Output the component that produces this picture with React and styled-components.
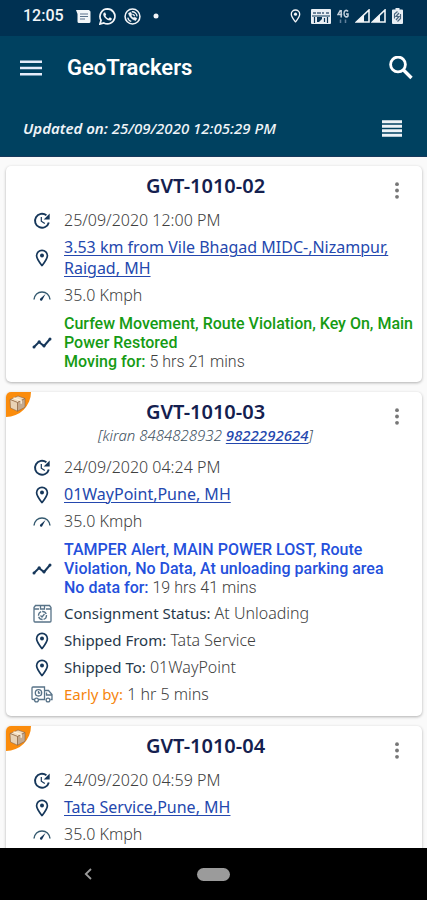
import React from "react";
import styled, { createGlobalStyle, css } from "styled-components";

const GlobalStyle = createGlobalStyle`
  *, *::before, *::after { box-sizing: border-box; }
  html, body { margin: 0; padding: 0; }
  body {
    background: #fafafa;
    font-family: "Noto Sans", "Open Sans", sans-serif;
    color: #5c5c5c;
  }
  svg { display: block; flex: none; }
`;

const Screen = styled.div`
  display: flex;
  flex-direction: column;
  height: 100vh;
`;

const StatusBar = styled.div`
  display: flex;
  align-items: center;
  justify-content: space-between;
  height: 36px;
  padding: 0 24px 4px 23px;
  background: #003152;
  color: #f2f5f8;
  font: 500 16px/20px Roboto, sans-serif;
`;

const StatusGroup = styled.div`
  display: flex;
  align-items: center;
  gap: ${(p) => p.$gap}px;
`;

const Clock = styled.span`
  margin-right: 4px;
`;

const AppBar = styled.header`
  display: flex;
  flex-direction: column;
  gap: 10px;
  padding: 10px 12px 0 20px;
  background: #004160;
  border-bottom: 1px solid #17395c;
  color: #fff;
`;

const BarRow = styled.div`
  display: flex;
  align-items: center;
  height: ${(p) => p.$height}px;
`;

const IconButton = styled.button`
  display: flex;
  align-items: center;
  justify-content: center;
  width: ${(p) => p.$width}px;
  height: 28px;
  padding: 0;
  border: 0;
  background: none;
  color: inherit;
  cursor: pointer;
`;

const AppTitle = styled.h1`
  flex: 1;
  margin: 0 0 0 25px;
  font: 600 22px/28px Roboto, sans-serif;
`;

const Updated = styled.p`
  flex: 1;
  margin: 0 0 0 3px;
  font-size: 15px;
  line-height: 20px;
  font-style: italic;
  font-weight: 500;
  color: #eef3f7;

  b { font-weight: 600; }
`;

const List = styled.main`
  flex: 1;
  min-height: 0;
  overflow: hidden;
  display: flex;
  flex-direction: column;
  gap: 10px;
  padding: 9px 5px 0 6px;
`;

const Card = styled.article`
  position: relative;
  flex: none;
  padding: 8px 8px 11px 0;
  border-radius: 5px;
  background: #fff;
  box-shadow: 0 1px 3px rgba(0, 0, 0, 0.3);
`;

const Badge = styled.span`
  position: absolute;
  top: 0;
  left: 0;
  width: 25px;
  height: 25px;
  padding: 3px;
  border-radius: 5px 0 25px 0;
  background: #fb8c0c;
`;

const CardHeader = styled.div`
  display: grid;
  grid-template-columns: 16px 1fr 16px;
  align-items: start;
  padding: 0 9px 12px 0;
  text-align: center;
`;

const Heading = styled.div`
  grid-column: 2;
`;

const OptionsButton = styled(IconButton)`
  height: 32px;
  margin-bottom: -8px;
`;

const VehicleName = styled.h2`
  margin: 0;
  font-size: 20px;
  line-height: 24px;
  font-weight: 600;
  color: #14204f;
`;

const Driver = styled.p`
  margin: 2px 0 0;
  font-size: 15px;
  line-height: 19px;
  font-style: italic;
  font-weight: 300;
  color: #3d5060;
`;

const Link = styled.a`
  color: #2448ae;
  text-decoration: underline;
  text-decoration-thickness: 1px;
  text-underline-offset: 2px;
  font-weight: ${(p) => (p.$strong ? 500 : 400)};
`;

const Rows = styled.ul`
  display: flex;
  flex-direction: column;
  gap: 6px;
  margin: 0;
  padding: 0 0 0 26px;
  list-style: none;
`;

const Row = styled.li`
  display: grid;
  grid-template-columns: 20px 1fr;
  column-gap: 12px;
  align-items: center;
  font-size: 16px;
  line-height: 21px;
  font-weight: 300;
  color: #404040;

  > svg { justify-self: center; color: #16375a; }

  ${(p) =>
    p.$alert &&
    css`
      margin-top: 2px;
      font-family: Roboto, sans-serif;
      line-height: 19px;
    `}
`;

const toneColors = { green: "#169b14", blue: "#2450dc", orange: "#f6860f", dark: "#26384a" };

const DetailLabel = styled.span`
  color: ${(p) => toneColors[p.$tone]};
  font-size: 15px;
  font-weight: 400;
`;

const AlertLabel = styled.span`
  color: ${(p) => toneColors[p.$tone]};
  font-weight: 500;
`;

const AlertLine = styled.div`
  color: ${(p) => toneColors[p.$tone]};
  font-weight: 500;
`;

const NavBar = styled.nav`
  display: grid;
  grid-template-columns: 1fr auto 1fr;
  align-items: center;
  height: 52px;
  background: #000;
  color: #9b9b9b;
`;

const NavBack = styled(IconButton)`
  justify-self: center;
  margin-right: 22px;
`;

const HomePill = styled.button`
  width: 33px;
  height: 13px;
  padding: 0;
  border: 0;
  border-radius: 7px;
  background: #9b9b9b;
`;

/* ---------- icons ---------- */

const NewsIcon = () => (
  <svg width="15" height="13" viewBox="0 0 15 13">
    <path d="M0 0h13l1.500 1.500V11.500a1.500 1.500 0 0 1-1.500 1.500H3a1.500 1.500 0 0 1-1.500-1.500V4z" fill="#f2f5f8" />
    <path d="M4 4h8M4 6.500h8M4 9h5" stroke="#5a718a" strokeWidth="1.200" />
  </svg>
);

const WhatsAppIcon = () => (
  <svg width="17" height="17" viewBox="0 0 24 24" fill="#f2f5f8">
    <path d="M17.472 14.382c-.297-.149-1.758-.867-2.030-.967-.273-.099-.471-.148-.670.150-.197.297-.767.966-.940 1.164-.173.199-.347.223-.644.075-.297-.150-1.255-.463-2.390-1.475-.883-.788-1.480-1.761-1.653-2.059-.173-.297-.018-.458.130-.606.134-.133.298-.347.446-.520.149-.174.198-.298.298-.497.099-.198.050-.371-.025-.520-.075-.149-.669-1.612-.916-2.207-.242-.579-.487-.500-.669-.510-.173-.008-.371-.010-.570-.010-.198 0-.520.074-.792.372-.272.297-1.040 1.016-1.040 2.479 0 1.462 1.065 2.875 1.213 3.074.149.198 2.096 3.200 5.077 4.487.709.306 1.262.489 1.694.625.712.227 1.360.195 1.871.118.571-.085 1.758-.719 2.006-1.413.248-.694.248-1.289.173-1.413-.074-.124-.272-.198-.570-.347" />
    <path d="M12 1.300a10.600 10.600 0 0 0-9.100 16L1.300 22.700l5.500-1.500A10.600 10.600 0 1 0 12 1.300z" fill="none" stroke="#f2f5f8" strokeWidth="2.400" />
  </svg>
);

const CallIcon = () => (
  <svg width="17" height="17" viewBox="0 0 24 24" fill="none" stroke="#f2f5f8" strokeWidth="2.200">
    <circle cx="12" cy="12" r="10.500" />
    <path d="M6.500 7.500c1 5 5 9 10 10l1.500-3-3.500-1.500-1.500 1c-1.500-.7-2.500-1.700-3-3l1-1.500-1.500-3.500z" fill="#f2f5f8" strokeWidth="1" />
    <path d="M11 5.300a7 7 0 0 1 7.500 6.500M5.300 13.500a7 7 0 0 0 5 5.300M12 9a3.500 3.500 0 0 1 3 2.500" strokeWidth="1.800" />
  </svg>
);

const DotIcon = () => (
  <svg width="12" height="6" viewBox="0 0 12 6"><circle cx="7" cy="3" r="2.500" fill="#f2f5f8" /></svg>
);

const PinIcon = ({ width = 14, height = 18 }) => (
  <svg width={width} height={height} viewBox="0 0 14 18" fill="none" stroke="currentColor" strokeWidth="1.700">
    <path d="M7 16.600C4 12.700 1.600 9.700 1.600 6.700a5.400 5.400 0 0 1 10.800 0c0 3-2.400 6-5.400 9.900z" strokeLinejoin="round" />
    <circle cx="7" cy="6.600" r="2" fill="currentColor" stroke="none" />
  </svg>
);

const VolteIcon = () => (
  <svg width="20" height="15" viewBox="0 0 20 15">
    <rect width="20" height="15" rx="1" fill="#e8eef4" />
    <path d="M2 4h3M6 4h4M11 4h2M15 4h3" stroke="#6b8299" strokeWidth="2" />
    <path d="M1 7h18" stroke="#0a3657" strokeWidth="1" />
    <path d="M3.500 8v6M16.500 8v6M13.500 9v4" stroke="#0a3657" strokeWidth="1.200" fill="none" />
    <path d="M6 8h5v2L8 13H6z" fill="#0a3657" />
  </svg>
);

const FourGIcon = () => (
  <svg width="12" height="15" viewBox="0 0 12 15" fill="none" stroke="#c3d0dc" strokeWidth="1.500">
    <path d="M3.500 1 1 5.500h4.200M4.200 1v7.500M11 2.500C10 .800 7 .800 7 4.500s3 4 4 2.500V5H9" />
    <path d="M3.500 10.500v3.500M8.500 10.500v3.500" stroke="#60809b" />
  </svg>
);

const SignalIcon = () => (
  <svg width="15" height="14" viewBox="0 0 15 14">
    <path d="M14 1v12H1.500z" fill="none" stroke="#f2f5f8" strokeWidth="1.600" />
    <path d="M9 5.500V13H1.500z" fill="#f2f5f8" />
  </svg>
);

const BatteryIcon = () => (
  <svg width="11" height="16" viewBox="0 0 11 16">
    <path d="M3.500 0h4v1.500H10a1 1 0 0 1 1 1V15a1 1 0 0 1-1 1H1a1 1 0 0 1-1-1V2.500a1 1 0 0 1 1-1h2.500z" fill="#e8eef4" />
    <path d="M2.500 10.500V6l3-2.500M8.500 6v4.500l-3 3M7 5 4 8.500h3L4 12" stroke="#4a667f" strokeWidth="1.200" fill="none" />
  </svg>
);

const MenuIcon = () => (
  <svg width="22" height="16" viewBox="0 0 22 16" stroke="#e6ecfa" strokeWidth="2.600">
    <path d="M0 1.700h22M0 8h22M0 14.300h22" />
  </svg>
);

const SearchIcon = () => (
  <svg width="25" height="25" viewBox="0 0 25 25" fill="none" stroke="#fff">
    <circle cx="9" cy="8.500" r="7.400" strokeWidth="2.800" />
    <path d="m14.500 14 8 8" strokeWidth="3.400" />
  </svg>
);

const ListIcon = () => (
  <svg width="20" height="17" viewBox="0 0 20 17" stroke="#eef3f7" strokeWidth="3">
    <path d="M0 1.800h20M0 6.300h20M0 10.800h20M0 15.300h20" />
  </svg>
);

const MoreIcon = () => (
  <svg width="4" height="17" viewBox="0 0 4 17" fill="#777">
    <circle cx="2" cy="2.200" r="1.900" /><circle cx="2" cy="8.500" r="1.900" /><circle cx="2" cy="14.800" r="1.900" />
  </svg>
);

const UpdateIcon = () => (
  <svg width="18" height="18" viewBox="0 0 18 18" fill="none" stroke="currentColor" strokeWidth="1.900">
    <path d="M13.400 3.300A7 7 0 1 0 15.800 10.500" />
    <path d="M16.700 1.500v6h-6z" fill="currentColor" stroke="none" />
    <path d="M8.300 5v4.200l3.500 2.300" strokeWidth="1.200" />
  </svg>
);

const SpeedIcon = () => (
  <svg width="18" height="12" viewBox="0 0 18 12" fill="none" stroke="#34596f" strokeWidth="1.500">
    <path d="M1 9.500C1.600 5 4.800 2 9 2s7.400 3 8 7.500" />
    <path d="M12.500 4 7.300 8.600c-1.200 1.500.6 3 1.900 1.600z" fill="#16375a" stroke="none" />
  </svg>
);

const TrendIcon = () => (
  <svg width="20" height="12" viewBox="0 0 20 12" fill="none" stroke="currentColor" strokeWidth="2">
    <path d="m2 10 5-5 5 4 6-7" />
    <g fill="currentColor" stroke="none">
      <circle cx="2" cy="10" r="1.500" /><circle cx="7.200" cy="4.800" r="1.600" />
      <circle cx="12" cy="8.800" r="1.600" /><circle cx="18" cy="2" r="1.500" />
    </g>
  </svg>
);

const ConsignmentIcon = () => (
  <svg width="19" height="19" viewBox="0 0 19 19" fill="none" stroke="#587388" strokeWidth="1.300">
    <path d="M1 3.500 2.500 1.500h14L18 3.500V17a1 1 0 0 1-1 1H2a1 1 0 0 1-1-1zM1 5h5M13 5h5M7.500 1.500V5h4V1.500" />
    <circle cx="9.500" cy="11.500" r="4" strokeDasharray="5 1" />
    <path d="m7.500 11.500 1.500 1.500 2.500-3" />
  </svg>
);

const TruckIcon = () => (
  <svg width="22" height="17" viewBox="0 0 22 17" fill="none" stroke="#587388" strokeWidth="1.300">
    <path d="M3.500 13.500H2a1 1 0 0 1-1-1V2a1 1 0 0 1 1-1h11.500v12.500H7.500M13.500 4.500h4l3.500 4v5h-1.500M15.500 6.500V9H21" />
    <circle cx="5.500" cy="14" r="1.900" /><circle cx="17" cy="14" r="1.900" />
    <circle cx="7.500" cy="6.800" r="3.200" /><path d="M7.500 5v2h1.800" />
  </svg>
);

const BoxIcon = () => (
  <svg width="17" height="17" viewBox="0 0 17 17" stroke="#8a6547" strokeWidth=".6" strokeLinejoin="round">
    <path d="M1 4.500 9 1l7 2.500-7.500 4z" fill="#f1dcc0" />
    <path d="m1 4.500 7.500 3v8.700L1.500 13z" fill="#e9d3b6" />
    <path d="m8.500 7.500 7.500-4v8.800l-7.500 3.900z" fill="#c3aa90" />
    <path d="m4.500 2.900 7.700 2.600v3.200" fill="none" stroke="#fff3df" strokeWidth="1.300" />
  </svg>
);

const BackIcon = () => (
  <svg width="8" height="12" viewBox="0 0 8 12" fill="none" stroke="currentColor" strokeWidth="1.800">
    <path d="M7 1 1.800 6 7 11" />
  </svg>
);

/* ---------- content ---------- */

const vehicles = [
  {
    name: "GVT-1010-02",
    time: "25/09/2020 12:00 PM",
    place: "3.53 km from Vile Bhagad MIDC-,Nizampur, Raigad, MH",
    speed: "35.0 Kmph",
    alert: {
      tone: "green",
      text: "Curfew Movement, Route Violation, Key On, Main Power Restored",
      label: "Moving for:",
      value: "5 hrs 21 mins",
    },
  },
  {
    name: "GVT-1010-03",
    shipment: true,
    driver: { text: "kiran 8484828932", phone: "9822292624" },
    time: "24/09/2020 04:24 PM",
    place: "01WayPoint,Pune, MH",
    speed: "35.0 Kmph",
    alert: {
      tone: "blue",
      text: "TAMPER Alert, MAIN POWER LOST, Route Violation, No Data, At unloading parking area",
      label: "No data for:",
      value: "19 hrs 41 mins",
    },
    details: [
      { Icon: ConsignmentIcon, label: "Consignment Status:", value: "At Unloading", tone: "dark" },
      { Icon: PinIcon, label: "Shipped From:", value: "Tata Service", tone: "dark" },
      { Icon: PinIcon, label: "Shipped To:", value: "01WayPoint", tone: "dark" },
      { Icon: TruckIcon, label: "Early by:", value: "1 hr 5 mins", tone: "orange" },
    ],
  },
  {
    name: "GVT-1010-04",
    shipment: true,
    time: "24/09/2020 04:59 PM",
    place: "Tata Service,Pune, MH",
    speed: "35.0 Kmph",
  },
];

function VehicleCard({ vehicle }) {
  const { name, shipment, driver, time, place, speed, alert, details = [] } = vehicle;
  return (
    <Card>
      {shipment && <Badge><BoxIcon /></Badge>}
      <CardHeader>
        <Heading>
          <VehicleName>{name}</VehicleName>
          {driver && (
            <Driver>
              [{driver.text} <Link $strong href={`tel:${driver.phone}`}>{driver.phone}</Link>]
            </Driver>
          )}
        </Heading>
        <OptionsButton $width={16} aria-label={`Options for ${name}`}><MoreIcon /></OptionsButton>
      </CardHeader>
      <Rows>
        <Row><UpdateIcon /><span>{time}</span></Row>
        <Row><PinIcon /><span><Link href="#map">{place}</Link></span></Row>
        <Row><SpeedIcon /><span>{speed}</span></Row>
        {alert && (
          <Row $alert>
            <TrendIcon />
            <div>
              <AlertLine $tone={alert.tone}>{alert.text}</AlertLine>
              <AlertLabel $tone={alert.tone}>{alert.label}</AlertLabel> {alert.value}
            </div>
          </Row>
        )}
        {details.map(({ Icon, label, value, tone }) => (
          <Row key={label}>
            <Icon />
            <span><DetailLabel $tone={tone}>{label}</DetailLabel> {value}</span>
          </Row>
        ))}
      </Rows>
    </Card>
  );
}

export default function App() {
  return (
    <Screen>
      <GlobalStyle />
      <StatusBar>
        <StatusGroup $gap={8}>
          <Clock>12:05</Clock>
          <NewsIcon />
          <WhatsAppIcon />
          <CallIcon />
          <DotIcon />
        </StatusGroup>
        <StatusGroup $gap={10}>
          <PinIcon width={11} height={14} />
          <StatusGroup $gap={6}>
            <VolteIcon />
            <FourGIcon />
            <StatusGroup $gap={1}>
              <SignalIcon />
              <SignalIcon />
            </StatusGroup>
            <BatteryIcon />
          </StatusGroup>
        </StatusGroup>
      </StatusBar>
      <AppBar>
        <BarRow $height={44}>
          <IconButton $width={22} aria-label="Menu"><MenuIcon /></IconButton>
          <AppTitle>GeoTrackers</AppTitle>
          <IconButton $width={28} aria-label="Search"><SearchIcon /></IconButton>
        </BarRow>
        <BarRow $height={56}>
          <Updated><b>Updated on:</b> 25/09/2020 12:05:29 PM</Updated>
          <IconButton $width={46} aria-label="List view"><ListIcon /></IconButton>
        </BarRow>
      </AppBar>
      <List>
        {vehicles.map((v) => <VehicleCard key={v.name} vehicle={v} />)}
      </List>
      <NavBar>
        <NavBack $width={28} aria-label="Back"><BackIcon /></NavBack>
        <HomePill aria-label="Home" />
      </NavBar>
    </Screen>
  );
}
